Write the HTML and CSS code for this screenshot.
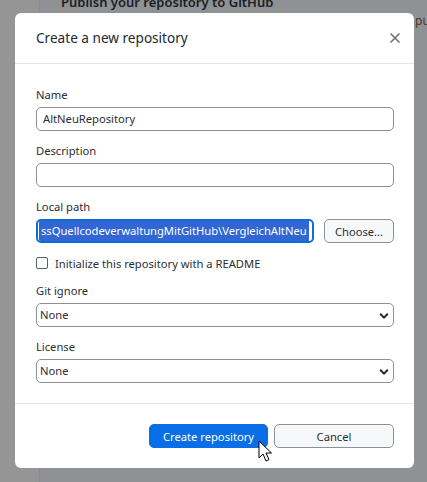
FILE: index.html
```html
<!DOCTYPE html>
<html>
<head>
<meta charset="utf-8">
<link rel="stylesheet" href="styles.css">
</head>
<body>
<div class="backdrop">
  <div class="side"></div>
  <div class="main">
    <div class="bg-title">Publish your repository to GitHub</div>
    <div class="bg-pu">pu</div>
  </div>
</div>

<div class="dialog">
  <div class="header">
    <div class="title">Create a new repository</div>
    <svg class="close" width="12" height="12" viewBox="0 0 12 12"><path d="M1.5 1.5 L10.5 10.5 M10.5 1.5 L1.5 10.5" stroke="#6a737d" stroke-width="1.6" fill="none"/></svg>
  </div>
  <div class="body">
    <div class="field">
      <div class="label">Name</div>
      <div class="input">AltNeuRepository</div>
    </div>
    <div class="field">
      <div class="label">Description</div>
      <div class="input"></div>
    </div>
    <div class="field last">
      <div class="label">Local path</div>
      <div class="pathrow">
        <div class="input focus"><span class="sel">ssQuellcodeverwaltungMitGitHub\VergleichAltNeu</span></div>
        <div class="btn choose">Choose...</div>
      </div>
    </div>
    <div class="check">
      <span class="box"></span>
      <span>Initialize this repository with a README</span>
    </div>
    <div class="field">
      <div class="label">Git ignore</div>
      <div class="input select">None
        <svg class="chev" width="10" height="8" viewBox="0 0 10 8"><path d="M1.2 1.8 L5 5.6 L8.8 1.8" stroke="#24292e" stroke-width="2" fill="none"/></svg>
      </div>
    </div>
    <div class="field last">
      <div class="label">License</div>
      <div class="input select">None
        <svg class="chev" width="10" height="8" viewBox="0 0 10 8"><path d="M1.2 1.8 L5 5.6 L8.8 1.8" stroke="#24292e" stroke-width="2" fill="none"/></svg>
      </div>
    </div>
  </div>
  <div class="footer">
    <div class="btn primary">Create repository</div>
    <div class="btn cancel">Cancel</div>
  </div>
</div>

<svg class="cursor" width="16" height="24" viewBox="0 0 16 24"><path d="M1 1 L1 18 L5 14 L8 21 L11 19.6 L8 13 L13.5 13 Z" fill="#fff" stroke="#000" stroke-width="1" stroke-linejoin="round"/></svg>
</body>
</html>
```
FILE: styles.css
```css
* { box-sizing: border-box; }
html, body { margin: 0; padding: 0; }
body {
  width: 427px;
  height: 482px;
  overflow: hidden;
  position: relative;
  font-family: "Noto Sans", "Open Sans", sans-serif;
  font-size: 11.2px;
  color: #2a2e33;
}
.backdrop {
  display: flex;
  height: 482px;
}
.side {
  width: 40px;
  background: #959595;
  border-right: 1px solid #8a8c90;
}
.main {
  flex: 1;
  background: #8f9195;
  position: relative;
}
.bg-title {
  position: absolute;
  left: 21px;
  top: -7px;
  font-size: 13px;
  font-weight: 600;
  color: #1b1f23;
}
.bg-pu {
  position: absolute;
  left: 375px;
  top: 12px;
  font-size: 12px;
  color: #4a3a1f;
}
.dialog {
  position: absolute;
  left: 15px;
  top: 13px;
  width: 399px;
  background: #fff;
  border-radius: 6px;
  display: flex;
  flex-direction: column;
}
.header {
  flex-shrink: 0;
  height: 51px;
  border-bottom: 1px solid #e1e4e8;
  display: flex;
  align-items: center;
  justify-content: space-between;
  padding: 0 13px 0 21px;
}
.title {
  font-size: 13.6px;
  color: #24292e;
  padding-bottom: 1px;
}
.body {
  padding: 23px 20px 20px 21px;
  display: flex;
  flex-direction: column;
}
.field { display: flex; flex-direction: column; }
.label {
  height: 16px;
  line-height: 16px;
  margin-bottom: 4px;
}
.input {
  height: 24px;
  border: 1px solid #8c9196;
  border-radius: 5px;
  padding: 0 6px;
  line-height: 22px;
  margin-bottom: 12px;
  white-space: nowrap;
  overflow: hidden;
}
.field.last .input { margin-bottom: 0; }
.pathrow {
  display: flex;
  gap: 10px;
}
.pathrow .input { margin-bottom: 0; flex: 1; }
.input.focus {
  border: 2px solid #0d6ed8;
  padding: 0 4px;
  line-height: 20px;
}
.sel {
  background: #3266d4;
  color: #fff;
  display: inline-block;
  margin-left: -3px;
  padding: 0 2px;
}
.btn {
  height: 24px;
  border: 1px solid #8c9196;
  border-radius: 5px;
  background: #f6f8fa;
  display: flex;
  align-items: center;
  justify-content: center;
}
.choose { width: 70px; flex-shrink: 0; }
.check {
  display: flex;
  align-items: center;
  gap: 7px;
  height: 12px;
  margin: 14px 0 14px;
}
.box {
  width: 12px;
  height: 12px;
  border: 1px solid #586069;
  border-radius: 2px;
}
.select {
  position: relative;
  padding-left: 3px;
}
.chev {
  position: absolute;
  right: 4px;
  top: 8px;
}
.footer {
  flex-shrink: 0;
  border-top: 1px solid #e1e4e8;
  display: flex;
  justify-content: flex-end;
  gap: 6px;
  padding: 20px 20px 20px 0;
}
.primary {
  width: 119px;
  background: #0a6ee6;
  border-color: #0a6ee6;
  color: #fff;
}
.cancel { width: 120px; }
.cursor {
  position: absolute;
  left: 258px;
  top: 440px;
}
```
